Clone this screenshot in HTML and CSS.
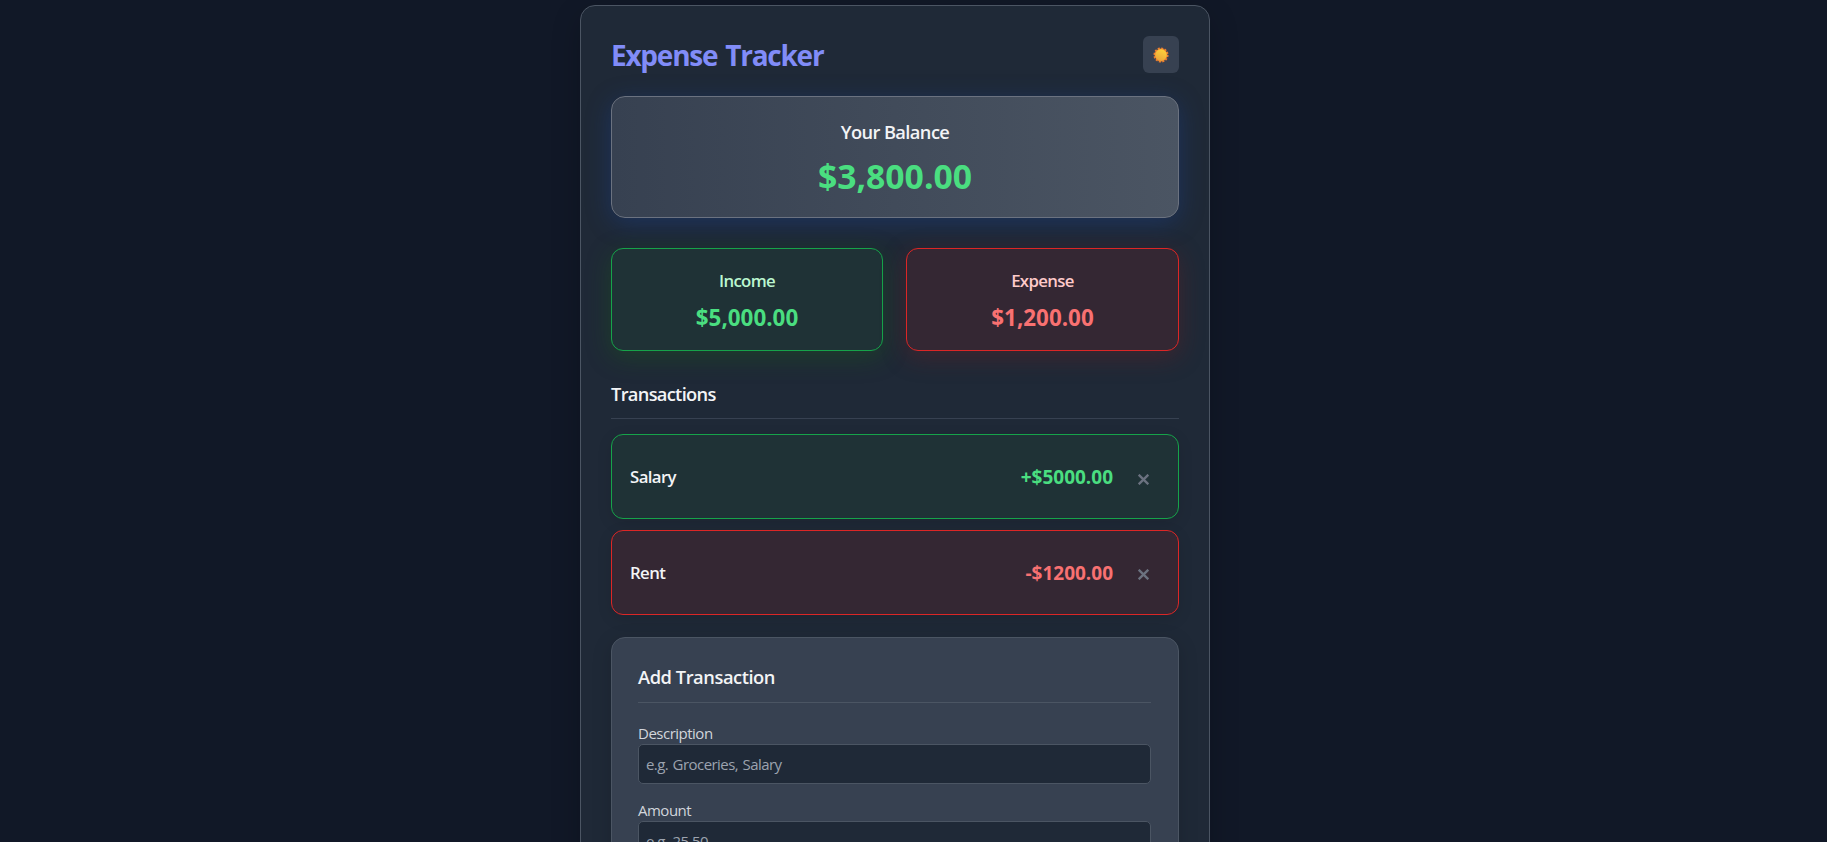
FILE: index.html
```html
<!DOCTYPE html>
<html lang="en">
<head>
<meta charset="utf-8">
<title>Expense Tracker</title>
<link rel="stylesheet" href="styles.css">
</head>
<body>
<main class="card">
  <header class="header">
    <h1 class="title">Expense Tracker</h1>
    <button class="theme-toggle" aria-label="Toggle theme">
      <svg width="16" height="16" viewBox="0 0 16 16">
        <defs><linearGradient id="sun" x1="0.7" y1="0" x2="0.3" y2="1"><stop offset="0" stop-color="#fdd23a"/><stop offset="1" stop-color="#e9a63a"/></linearGradient></defs>
        <circle cx="8" cy="8" r="6.7" fill="none" stroke="#ee7d2f" stroke-width="1.7" stroke-dasharray="2.1 1.408"/>
        <circle cx="8" cy="8" r="6.4" fill="#f08a30"/>
        <circle cx="8" cy="8" r="5.7" fill="url(#sun)"/>
      </svg>
    </button>
  </header>
  <section class="balance">
    <h2 class="balance-label">Your Balance</h2>
    <p class="balance-amount">$3,800.00</p>
  </section>
  <section class="summary">
    <div class="stat income">
      <h3 class="stat-label">Income</h3>
      <p class="stat-amount">$5,000.00</p>
    </div>
    <div class="stat expense">
      <h3 class="stat-label">Expense</h3>
      <p class="stat-amount">$1,200.00</p>
    </div>
  </section>
  <h2 class="section-title">Transactions</h2>
  <ul class="list">
    <li class="item income">
      <span class="item-name">Salary</span>
      <span class="item-amount">+$5000.00</span>
      <button class="remove" aria-label="Remove"><svg width="11" height="11" viewBox="0 0 11 11"><path d="M.7.7l9.6 9.6M10.3.7L.7 10.3"/></svg></button>
    </li>
    <li class="item expense">
      <span class="item-name">Rent</span>
      <span class="item-amount">-$1200.00</span>
      <button class="remove" aria-label="Remove"><svg width="11" height="11" viewBox="0 0 11 11"><path d="M.7.7l9.6 9.6M10.3.7L.7 10.3"/></svg></button>
    </li>
  </ul>
  <form class="form">
    <h2 class="form-title">Add Transaction</h2>
    <label class="field"><span class="field-label">Description</span>
      <input class="input" type="text" placeholder="e.g. Groceries, Salary"></label>
    <label class="field"><span class="field-label">Amount</span>
      <input class="input" type="text" placeholder="e.g. 25.50"></label>
  </form>
</main>
</body>
</html>
```
FILE: styles.css
```css
* { box-sizing: border-box; margin: 0; padding: 0; }
html, body { height: 100%; overflow: hidden; }
body {
  background: #111827;
  color: #f3f4f6;
  font-family: "Open Sans", "Noto Sans", sans-serif;
  padding-top: 5px;
}
.card {
  width: 630px;
  height: 1000px;
  margin-left: 580px;
  padding: 30px;
  background: #1f2937;
  border: 1px solid #4b5563;
  border-radius: 15px;
  box-shadow: 0 10px 30px rgba(0, 0, 0, 0.2);
}
.header { display: flex; justify-content: space-between; align-items: flex-start; height: 60px; }
.title { color: #818cf8; font-size: 28px; font-weight: 700; letter-spacing: -1.25px; word-spacing: 2px; line-height: 38px; }
.theme-toggle {
  display: flex; align-items: center; justify-content: center;
  width: 36px; height: 37px; padding-right: 1px; border: 0; border-radius: 6px; background: #374151;
}
.balance {
  height: 122px; padding-top: 21px; text-align: center;
  background: linear-gradient(90deg, #374151, #4b5563);
  border: 1px solid #6b7280; border-radius: 14px;
  box-shadow: 0 5px 25px rgba(25, 70, 160, 0.36);
}
.balance-label { font-size: 18.3px; font-weight: 600; letter-spacing: -0.6px; line-height: 28px; }
.balance-amount { color: #4ade80; font-size: 33.7px; font-weight: 700; line-height: 46px; margin-top: 7px; }
.summary { display: grid; grid-template-columns: 272px 273px; gap: 23px; margin-top: 30px; }
.stat { height: 103px; padding-top: 20px; text-align: center; border: 1px solid; border-radius: 12px; }
.income { background: #1f3236; border-color: #16a34a; }
.expense { background: #342733; border-color: #dc2626; }
.stat.income { box-shadow: 0 6px 25px rgba(26, 95, 22, 0.4); }
.stat.expense { box-shadow: 0 6px 25px rgba(127, 29, 29, 0.34); }
.stat-label { font-size: 16.8px; font-weight: 600; letter-spacing: -0.65px; line-height: 24px; }
.income .stat-label { color: #bbf7d0; }
.expense .stat-label { color: #fecaca; }
.stat-amount { font-size: 22.4px; font-weight: 700; line-height: 30px; margin-top: 10px; }
.income .stat-amount, .income .item-amount { color: #4ade80; }
.expense .stat-amount, .expense .item-amount { color: #f87171; }
.section-title {
  margin-top: 30px; height: 38px; border-bottom: 1px solid #374151;
  font-size: 18.3px; font-weight: 600; letter-spacing: -0.7px; line-height: 26px;
}
.list { list-style: none; display: grid; gap: 11px; margin-top: 15px; }
.item {
  display: flex; align-items: center; height: 85px; padding: 0 29px 0 18px;
  border-width: 1px; border-style: solid; border-radius: 12px;
  box-shadow: 0 4px 15px rgba(0, 0, 0, 0.1);
}
.item-name { flex: 1; font-size: 16.8px; font-weight: 600; letter-spacing: -0.6px; }
.item-amount { font-size: 19px; font-weight: 700; }
.remove { display: flex; margin-left: 25px; padding-top: 4px; border: 0; background: none; }
.income .remove { padding-top: 6px; }
.remove svg { fill: none; stroke: #6b7280; stroke-width: 2.3; }
.form {
  height: 400px; margin-top: 22px; padding: 26px 27px 26px 26px;
  background: #374151; border: 1px solid #4b5563; border-radius: 14px;
  box-shadow: 0 5px 20px rgba(0, 0, 0, 0.15);
}
.form-title {
  height: 39px; border-bottom: 1px solid #4b5563;
  font-size: 18.3px; font-weight: 600; letter-spacing: -0.45px; line-height: 26px;
}
.field { display: block; margin-top: 18px; }
.form-title + .field { margin-top: 22px; }
.field-label { display: block; height: 19px; color: #d1d5db; font-size: 15px; letter-spacing: -0.5px; line-height: 16px; }
.input {
  display: block; width: 100%; height: 40px; padding: 0 8px 0 7px;
  background: #1f2937; border: 1px solid #4b5563; border-radius: 5px;
  color: #f3f4f6; font-family: "Open Sans", sans-serif; font-size: 15px; letter-spacing: -0.55px; word-spacing: 1px;
}
.input::placeholder { color: #9ca3af; }
```
